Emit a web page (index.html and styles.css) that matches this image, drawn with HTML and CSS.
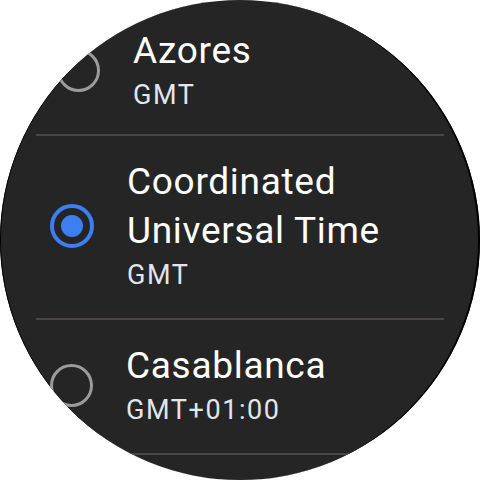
FILE: index.html
```html
<!DOCTYPE html>
<html>
<head>
<meta charset="utf-8">
<link rel="stylesheet" href="styles.css">
</head>
<body>
<div class="watch">
  <ul class="list">
    <li class="item item-first">
      <span class="radio"></span>
      <div class="text">
        <div class="title">Azores</div>
        <div class="sub">GMT</div>
      </div>
    </li>
    <li class="item">
      <span class="radio radio-on"><span class="dot"></span></span>
      <div class="text">
        <div class="title">Coordinated<br>Universal Time</div>
        <div class="sub">GMT</div>
      </div>
    </li>
    <li class="item">
      <span class="radio"></span>
      <div class="text">
        <div class="title">Casablanca</div>
        <div class="sub">GMT+01:00</div>
      </div>
    </li>
    <li class="item item-next">
      <span class="radio"></span>
      <div class="text">
        <div class="title">Dublin</div>
        <div class="sub">GMT+01:00</div>
      </div>
    </li>
  </ul>
</div>
</body>
</html>
```
FILE: styles.css
```css
html, body {
  margin: 0;
  padding: 0;
  background: #ffffff;
}
.watch {
  width: 480px;
  height: 480px;
  border-radius: 50%;
  background: #252525;
  overflow: hidden;
  font-family: Roboto, "Noto Sans", sans-serif;
  box-shadow: inset 2px 0 0 -1px #000, inset -3px 0 0 -1px #000;
}
.list {
  list-style: none;
  margin: 0;
  padding: 5px 0 0 0;
}
.item {
  display: flex;
  align-items: center;
  margin: 0 36px;
  padding: 21px 0 23px 14px;
  border-bottom: 2px solid #4a4646;
}
.item-first {
  padding-left: 21px;
  padding-bottom: 19px;
}
.item-next {
  padding-top: 14px;
}
.radio {
  flex: none;
  box-sizing: border-box;
  width: 43px;
  height: 43px;
  border-radius: 50%;
  border: 3px solid #9b9b9b;
  display: flex;
  align-items: center;
  justify-content: center;
}
.radio-on {
  border: 4px solid #3b7ff2;
  width: 44px;
  height: 44px;
}
.dot {
  width: 22px;
  height: 22px;
  border-radius: 50%;
  background: #3b7ff2;
}
.text {
  margin-left: 33px;
}
.title {
  color: #ffffff;
  font-size: 37px;
  line-height: 49px;
  letter-spacing: 0.7px;
}
.sub {
  color: #e1e6ee;
  font-size: 27px;
  line-height: 40px;
  letter-spacing: 1.6px;
}
```
